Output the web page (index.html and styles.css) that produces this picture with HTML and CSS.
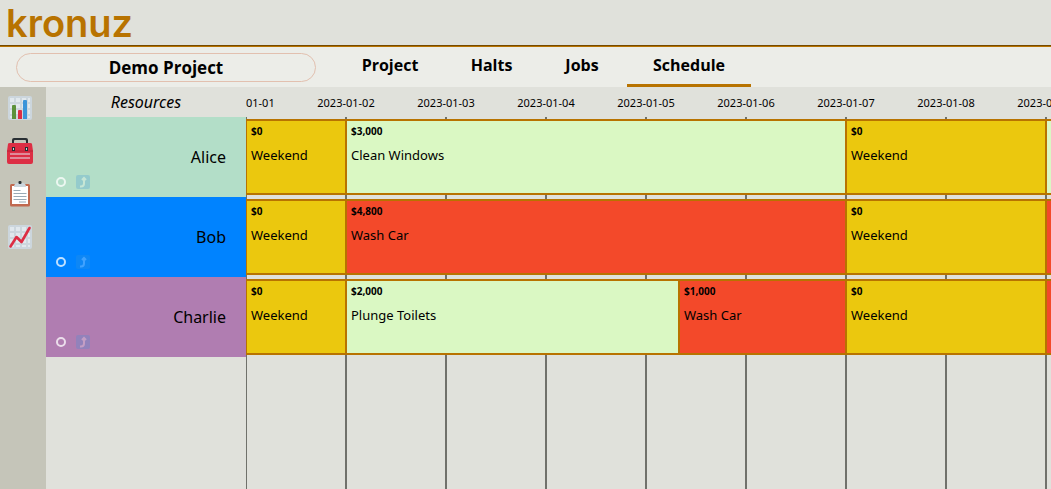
FILE: index.html
```html
<!DOCTYPE html>
<html lang="en">
<head>
<meta charset="utf-8">
<meta name="viewport" content="width=device-width, initial-scale=1">
<title>kronuz</title>
<link rel="stylesheet" href="styles.css">
</head>
<body>
<header class="brand"><a class="logo" href="#">kronuz</a></header>
<div class="topbar">
  <button class="project-name" type="button">Demo Project</button>
  <nav class="tabs">
    <a class="tab" href="#project">Project</a>
    <a class="tab" href="#halts">Halts</a>
    <a class="tab" href="#jobs">Jobs</a>
    <a class="tab active" href="#schedule" aria-current="page">Schedule</a>
  </nav>
</div>
<div class="workspace">
  <nav class="sidebar">
    <a class="tool" href="#dashboard" aria-label="Dashboard">
      <svg viewBox="0 0 26 26"><rect x="1" y="1" width="24" height="24" rx="2" fill="#ccd6dd"/><path d="M3 3h4v4H3zM9 3h4v4H9zM15 3h4v4h-4zM21 3h2v4h-2zM3 9h4v4H3zM9 9h4v4H9zM15 9h4v4h-4zM3 15h4v4H3zM9 15h4v4H9zM21 9h2v4h-2zM21 15h2v4h-2zM3 21h4v2H3zM21 21h2v2h-2z" fill="#e1e8ed"/><path d="M5 24V11q0-1 1-1h2q1 0 1 1v13z" fill="#5c913b"/><path d="M11 24v-8q0-1 1-1h2q1 0 1 1v8z" fill="#dd2e44"/><path d="M16 24V6q0-1 1-1h2q1 0 1 1v18z" fill="#3b94d9"/></svg>
    </a>
    <a class="tool" href="#toolbox" aria-label="Toolbox">
      <svg viewBox="0 0 26 26"><path d="M5 6V2q0-2 2-2h12q2 0 2 2v4h-2V3q0-1-1-1H8Q7 2 7 3v3z" fill="#292f33"/><path d="M1 6q0-1 2-1h20q2 0 2 1l1 7v11q0 2-2 2H2q-2 0-2-2V13z" fill="#dd2e44"/><path d="M0 13h26" stroke="#b8243a"/><path d="M5 9h3v4H5zM18 9h3v4h-3z" fill="#292f33"/><path d="M6 10h1v2H6zM19 10h1v2h-1z" fill="#ccd6dd"/><path d="M3 16h20M3 20h20" stroke="#e1e8ed" stroke-width="1.2"/></svg>
    </a>
    <a class="tool" href="#tasks" aria-label="Tasks">
      <svg viewBox="0 0 26 26"><rect x="3" y="3" width="20" height="22.500" rx="1.500" fill="#c1694f"/><path d="M5 5h16v18H5z" fill="#fff"/><path d="M7 6q0-4 4-4h4q4 0 4 4z" fill="#ccd6dd"/><rect x="11.500" y="0" width="3" height="3" rx="1" fill="#292f33"/><path d="M6.500 9.500h7M6.500 12.500h13M6.500 15.500h13M6.500 18.500h13M12 21h7" stroke="#99aab5"/></svg>
    </a>
    <a class="tool" href="#trends" aria-label="Trends">
      <svg viewBox="0 0 26 26"><rect x="1" y="1" width="24" height="24" rx="2" fill="#ccd6dd"/><path d="M3 3h4v4H3zM9 3h4v4H9zM15 3h4v4h-4zM21 3h2v4h-2zM3 9h4v4H3zM9 9h4v4H9zM15 9h4v4h-4zM21 9h2v4h-2zM3 15h4v4H3zM9 15h4v4H9zM15 15h4v4h-4zM21 15h2v4h-2zM3 21h4v2H3zM9 21h4v2H9zM15 21h4v2h-4zM21 21h2v2h-2z" fill="#e1e8ed"/><path d="M3.500 22.500l6-9.500 5 5L22.500 4" fill="none" stroke="#dd2e44" stroke-width="2.600" stroke-linecap="round" stroke-linejoin="round"/></svg>
    </a>
  </nav>
  <section class="resources">
    <h2 class="resources-title">Resources</h2>
    <div class="resource alice"><span class="name">Alice</span>
      <div class="actions"><button class="ring" type="button" aria-label="Select Alice"></button><button class="open" type="button" aria-label="Open Alice"><svg viewBox="0 0 14 14"><path d="M4 11.500h1q3 0 3-3V4M6 5l2-2 2 2"/></svg></button></div></div>
    <div class="resource bob"><span class="name">Bob</span>
      <div class="actions"><button class="ring" type="button" aria-label="Select Bob"></button><button class="open" type="button" aria-label="Open Bob"><svg viewBox="0 0 14 14"><path d="M4 11.500h1q3 0 3-3V4M6 5l2-2 2 2"/></svg></button></div></div>
    <div class="resource charlie"><span class="name">Charlie</span>
      <div class="actions"><button class="ring" type="button" aria-label="Select Charlie"></button><button class="open" type="button" aria-label="Open Charlie"><svg viewBox="0 0 14 14"><path d="M4 11.500h1q3 0 3-3V4M6 5l2-2 2 2"/></svg></button></div></div>
  </section>
  <main class="timeline">
    <div class="dates">
      <time>2023-01-01</time><time>2023-01-02</time><time>2023-01-03</time><time>2023-01-04</time><time>2023-01-05</time><time>2023-01-06</time><time>2023-01-07</time><time>2023-01-08</time><time>2023-01-09</time>
    </div>
    <div class="chart">
      <div class="lane">
        <article class="block halt" style="--days:1"><b>$0</b><span>Weekend</span></article>
        <article class="block light" style="--days:5"><b>$3,000</b><span>Clean Windows</span></article>
        <article class="block halt" style="--days:2"><b>$0</b><span>Weekend</span></article>
        <article class="block light" style="--days:5"></article>
      </div>
      <div class="lane">
        <article class="block halt" style="--days:1"><b>$0</b><span>Weekend</span></article>
        <article class="block heavy" style="--days:5"><b>$4,800</b><span>Wash Car</span></article>
        <article class="block halt" style="--days:2"><b>$0</b><span>Weekend</span></article>
        <article class="block heavy" style="--days:5"></article>
      </div>
      <div class="lane">
        <article class="block halt" style="--days:1"><b>$0</b><span>Weekend</span></article>
        <article class="block light" style="--days:3.33"><b>$2,000</b><span>Plunge Toilets</span></article>
        <article class="block heavy" style="--days:1.67"><b>$1,000</b><span>Wash Car</span></article>
        <article class="block halt" style="--days:2"><b>$0</b><span>Weekend</span></article>
        <article class="block heavy" style="--days:5"></article>
      </div>
    </div>
  </main>
</div>
</body>
</html>
```
FILE: styles.css
```css
* { box-sizing: border-box; }
body {
  margin: 0;
  min-height: 100vh;
  display: flex;
  flex-direction: column;
  overflow-x: hidden;
  background: #e0e1db;
  color: #000;
  font-family: "Noto Sans", "Open Sans", sans-serif;
}
a { color: inherit; text-decoration: none; }
button { border: 0; padding: 0; background: none; color: inherit; font: inherit; cursor: pointer; }

.brand { height: 46px; padding-left: 6px; border-bottom: 1px solid #744900; }
.logo {
  display: block;
  color: #b87300;
  font: 600 38px/46px Inter, sans-serif;
}
.topbar {
  display: flex;
  height: 41px;
  padding-left: 16px;
  border-top: 1px solid #b87300;
  background: #ecede8;
}
.project-name {
  width: 300px;
  height: 29px;
  margin-top: 6px;
  border: 1px solid #e2c0af;
  border-radius: 15px;
  font: 700 17px/26px "Open Sans", sans-serif;
}
.tabs {
  display: grid;
  grid-template-columns: 106px 91px 84px 124px;
  column-gap: 3px;
  margin-left: 21px;
}
.tab {
  border-bottom: 3px solid transparent;
  border-radius: 3px 3px 0 0;
  text-align: center;
  font: 700 16px/37px "Open Sans", sans-serif;
}
.tab.active { border-color: #b87300; }

.workspace { flex: 1; display: flex; }
.sidebar {
  flex: none;
  width: 46px;
  padding: 8px 7px;
  display: flex;
  flex-direction: column;
  gap: 17px;
  background: #c5c5b9;
}
.tool svg { display: block; width: 26px; height: 26px; }

.resources { flex: none; width: 200px; }
.resources-title {
  margin: 0;
  text-align: center;
  font-size: 16px;
  font-style: italic;
  font-weight: 400;
  line-height: 30px;
}
.resource {
  display: grid;
  grid-template-rows: 56px 24px;
  height: 80px;
  padding: 0 20px 0 10px;
}
.name { align-self: end; justify-self: end; font-size: 16px; line-height: 32px; }
.alice { background: #b3dec8; }
.bob { background: #0083ff; }
.charlie { background: #b07db1; }
.actions { display: flex; align-items: center; gap: 10px; height: 18px; }
.ring { width: 10px; height: 10px; border: 2px solid #fff; border-radius: 50%; opacity: .75; }
.open { width: 14px; height: 14px; border-radius: 2px; background: #3b94d9; opacity: .25; }
.open svg { display: block; width: 14px; height: 14px; fill: none; stroke: #fff; stroke-width: 2; }

.timeline { flex: 1; min-width: 0; display: flex; flex-direction: column; overflow: hidden; }
.dates { display: flex; height: 30px; margin-left: -50px; }
.dates time {
  flex: none;
  width: 100px;
  text-align: center;
  font-size: 11px;
  line-height: 32px;
}
.chart {
  flex: 1;
  background: repeating-linear-gradient(90deg, #70716b 0 1px, transparent 1px 99px, #70716b 99px 100px);
}
.lane { display: flex; height: 80px; padding: 2px 0; margin-left: -1px; }
.block {
  flex: none;
  display: flex;
  flex-direction: column;
  width: calc(var(--days) * 100px + 2px);
  margin-right: -2px;
  border: 2px solid #b87300;
  padding: 2px 4px;
}
.block b { font-size: 10px; line-height: 16px; }
.block span { margin-top: 6px; font-size: 13px; line-height: 20px; }
.halt { background: #ebc80e; }
.light { background: #daf8c3; }
.heavy { background: #f3492a; }
```
